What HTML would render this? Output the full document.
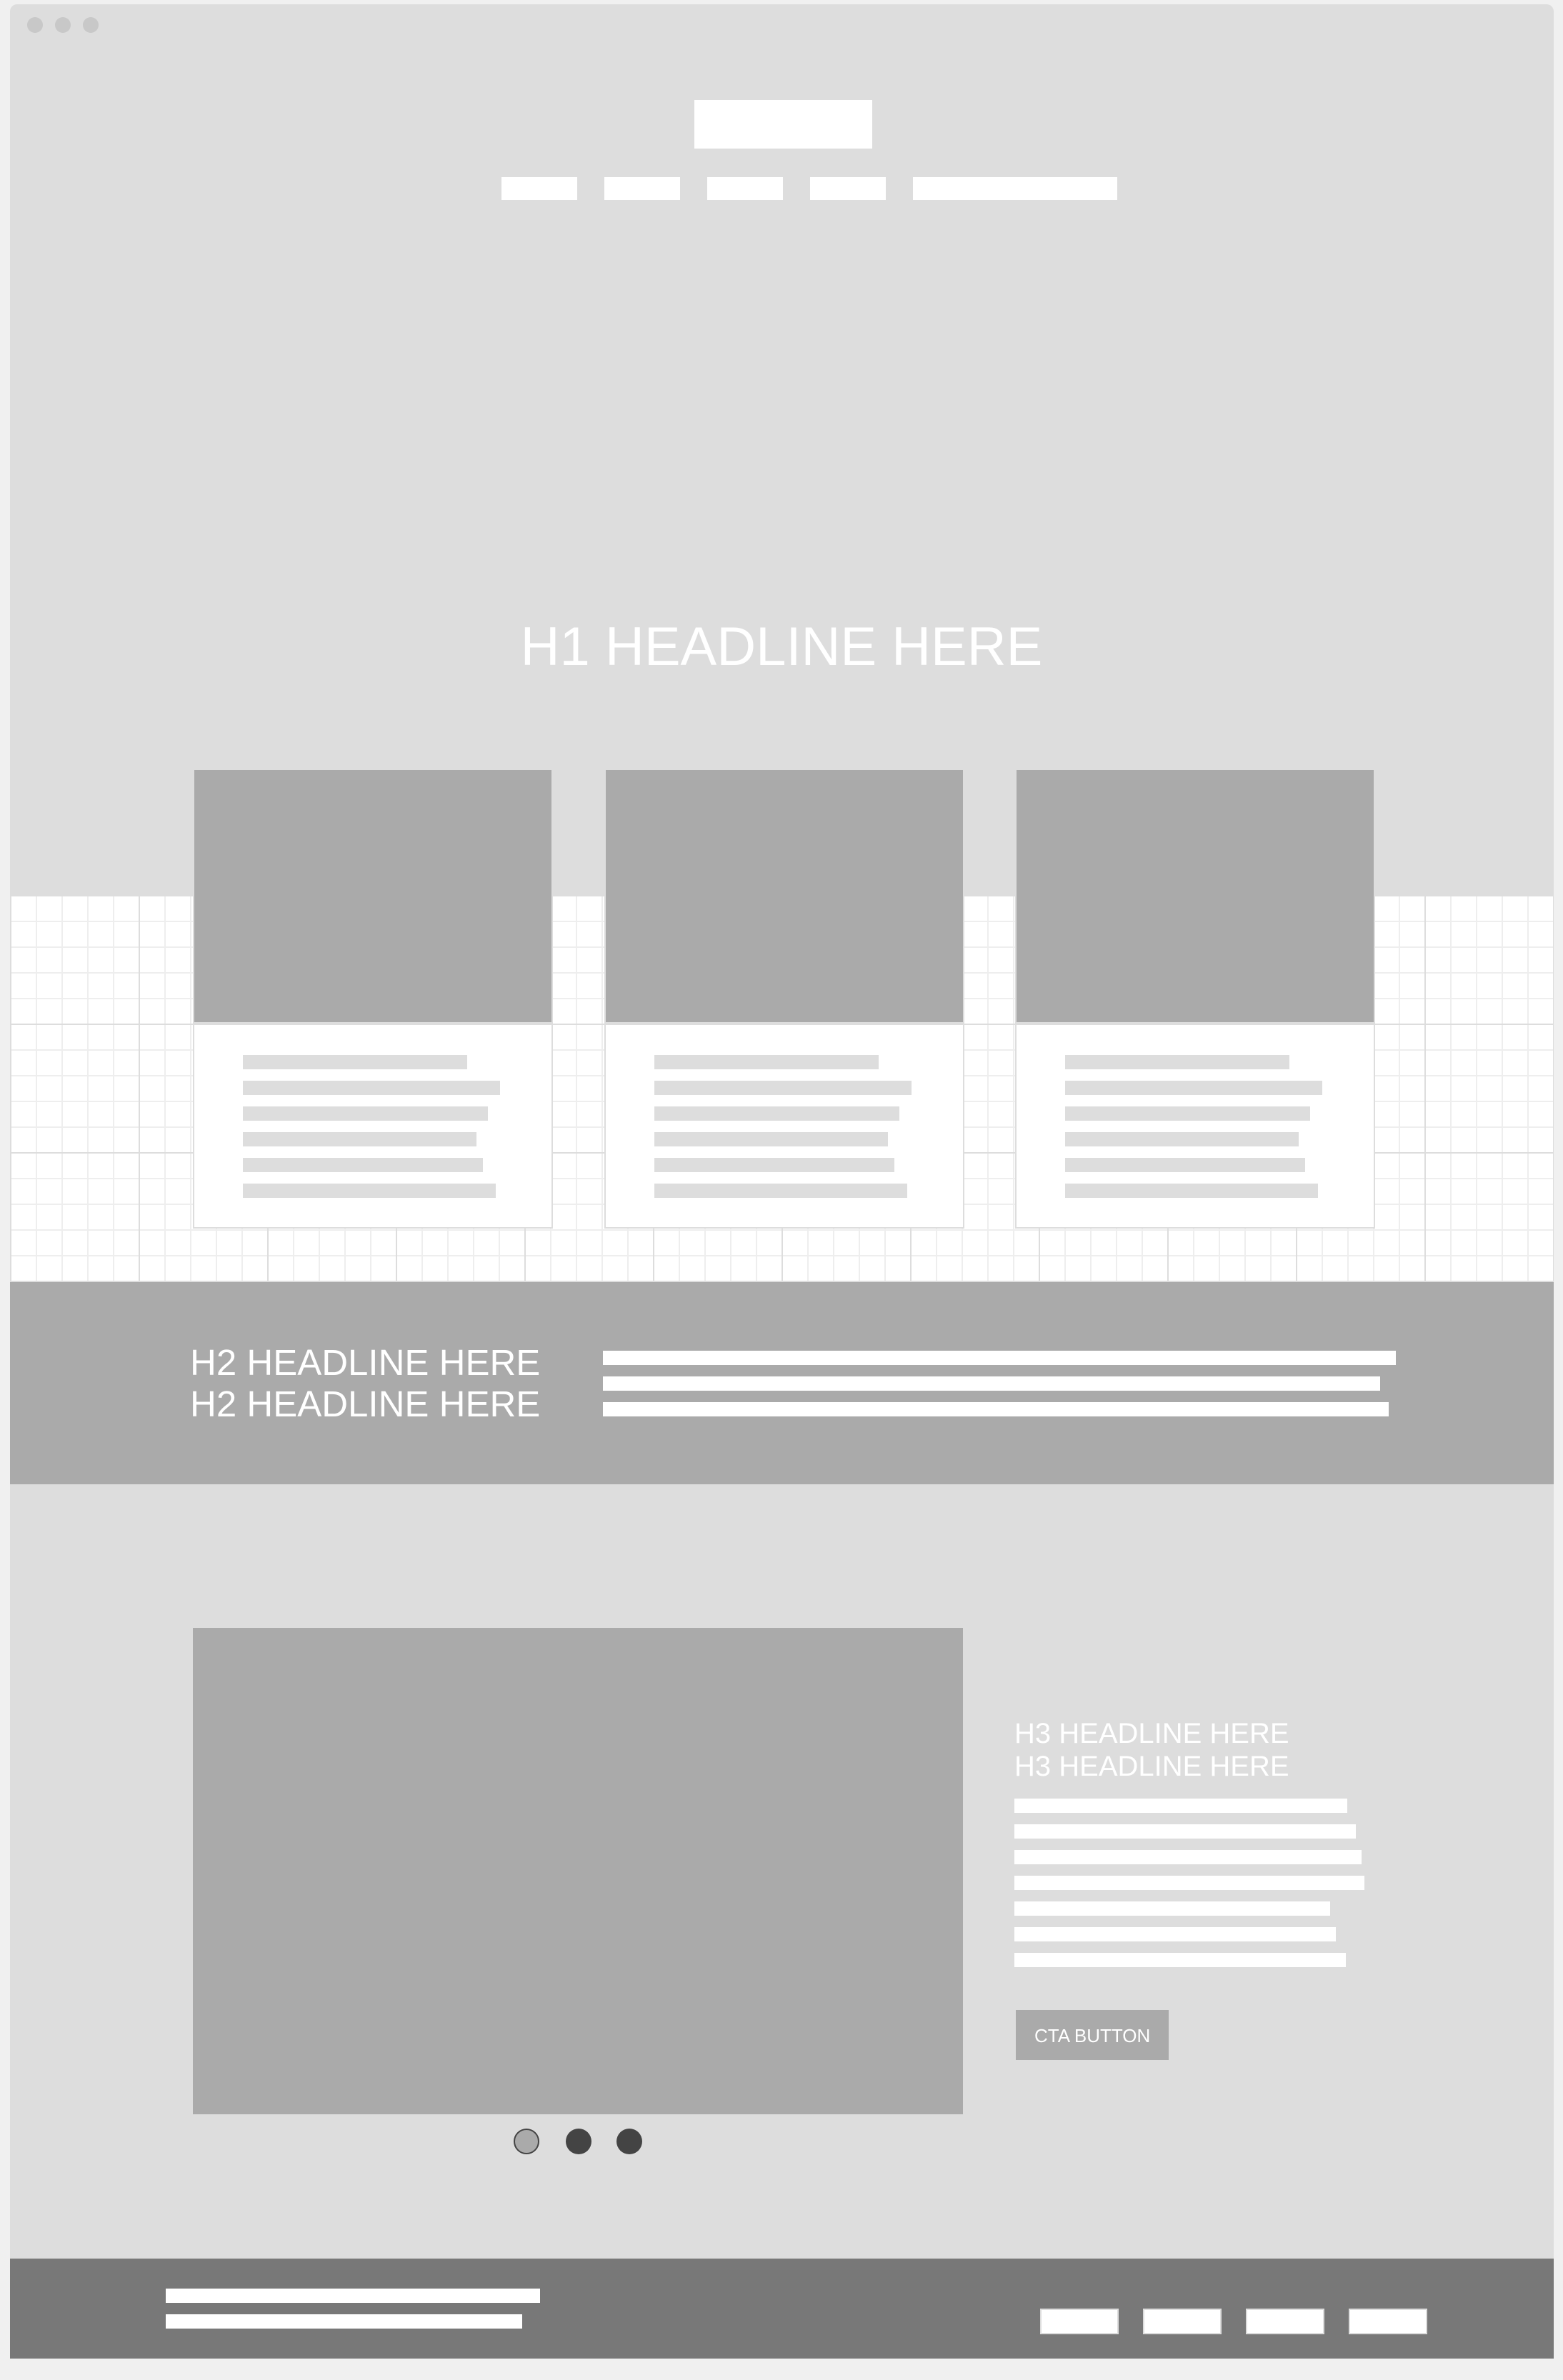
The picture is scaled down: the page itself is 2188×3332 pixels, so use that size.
<!DOCTYPE html>
<html><head><meta charset="utf-8"><style>
*{margin:0;padding:0;box-sizing:border-box}
html,body{width:2188px;height:3332px;background:#f0f0f0;overflow:hidden;font-family:"Liberation Sans",sans-serif}
.a{position:absolute}
.w{background:#fff}
.frame{left:14px;top:6px;width:2161px;height:3296px;background:#ddd;border-radius:10px 10px 0 0}
.dot{width:22px;height:22px;border-radius:50%;background:#c8c8c8;top:24px}
.grid{left:14px;top:1253px;width:2161px;height:541px;background-color:#fff;
background-image:
linear-gradient(to right,#ddd 2px,transparent 2px),
linear-gradient(to bottom,#ddd 2px,transparent 2px),
linear-gradient(to right,#eee 2px,transparent 2px),
linear-gradient(to bottom,#eee 2px,transparent 2px);
background-size:180px 180px,180px 180px,36px 36px,36px 36px;background-position:0 0}
.card{width:504px;height:644px;top:1076px;background:#fff;border:2px solid #ddd}
.card .img{position:absolute;left:0;top:0;right:0;height:357px;background:#aaa;border-bottom:4px solid #ddd}
.card i{position:absolute;left:68px;height:20px;background:#ddd}
.txt{color:#fff;white-space:nowrap;line-height:1}
</style></head><body>
<div class="a frame"></div>
<div class="a dot" style="left:38px"></div>
<div class="a dot" style="left:77px"></div>
<div class="a dot" style="left:116px"></div>

<div class="a w" style="left:972px;top:140px;width:249px;height:68px"></div>
<div class="a w" style="left:702px;top:248px;width:106px;height:32px"></div>
<div class="a w" style="left:846px;top:248px;width:106px;height:32px"></div>
<div class="a w" style="left:990px;top:248px;width:106px;height:32px"></div>
<div class="a w" style="left:1134px;top:248px;width:106px;height:32px"></div>
<div class="a w" style="left:1278px;top:248px;width:286px;height:32px"></div>

<div class="a txt" style="left:0;width:2188px;text-align:center;top:868px;font-size:76px">H1 HEADLINE HERE</div>

<div class="a grid"></div>

<div class="a card" style="left:270px"><div class="img"></div>
<i style="top:399px;width:314px"></i><i style="top:435px;width:360px"></i><i style="top:471px;width:343px"></i><i style="top:507px;width:327px"></i><i style="top:543px;width:336px"></i><i style="top:579px;width:354px"></i></div>
<div class="a card" style="left:846px"><div class="img"></div>
<i style="top:399px;width:314px"></i><i style="top:435px;width:360px"></i><i style="top:471px;width:343px"></i><i style="top:507px;width:327px"></i><i style="top:543px;width:336px"></i><i style="top:579px;width:354px"></i></div>
<div class="a card" style="left:1421px"><div class="img"></div>
<i style="top:399px;width:314px"></i><i style="top:435px;width:360px"></i><i style="top:471px;width:343px"></i><i style="top:507px;width:327px"></i><i style="top:543px;width:336px"></i><i style="top:579px;width:354px"></i></div>

<div class="a" style="left:14px;top:1795px;width:2161px;height:283px;background:#aaa"></div>
<div class="a txt" style="left:266px;top:1882px;font-size:51px">H2 HEADLINE HERE</div>
<div class="a txt" style="left:266px;top:1940px;font-size:51px">H2 HEADLINE HERE</div>
<div class="a w" style="left:844px;top:1891px;width:1110px;height:20px"></div>
<div class="a w" style="left:844px;top:1927px;width:1088px;height:20px"></div>
<div class="a w" style="left:844px;top:1963px;width:1100px;height:20px"></div>

<div class="a" style="left:270px;top:2279px;width:1078px;height:681px;background:#aaa"></div>
<div class="a" style="left:719px;top:2980px;width:36px;height:36px;border-radius:50%;background:#aaa;border:2px solid #444"></div>
<div class="a" style="left:792px;top:2980px;width:36px;height:36px;border-radius:50%;background:#444"></div>
<div class="a" style="left:863px;top:2980px;width:36px;height:36px;border-radius:50%;background:#444"></div>

<div class="a txt" style="left:1420px;top:2407px;font-size:40px">H3 HEADLINE HERE</div>
<div class="a txt" style="left:1420px;top:2453px;font-size:40px">H3 HEADLINE HERE</div>
<div class="a w" style="left:1420px;top:2518px;width:466px;height:20px"></div>
<div class="a w" style="left:1420px;top:2554px;width:478px;height:20px"></div>
<div class="a w" style="left:1420px;top:2590px;width:486px;height:20px"></div>
<div class="a w" style="left:1420px;top:2626px;width:490px;height:20px"></div>
<div class="a w" style="left:1420px;top:2662px;width:442px;height:20px"></div>
<div class="a w" style="left:1420px;top:2698px;width:450px;height:20px"></div>
<div class="a w" style="left:1420px;top:2734px;width:464px;height:20px"></div>
<div class="a" style="left:1422px;top:2814px;width:214px;height:70px;background:#aaa"></div>
<div class="a txt" style="left:1448px;top:2837px;font-size:26px">CTA BUTTON</div>

<div class="a" style="left:14px;top:3162px;width:2161px;height:140px;background:#787878"></div>
<div class="a w" style="left:232px;top:3204px;width:524px;height:20px"></div>
<div class="a w" style="left:232px;top:3240px;width:499px;height:20px"></div>
<div class="a w" style="left:1456px;top:3232px;width:110px;height:36px;border:2px solid #ddd"></div>
<div class="a w" style="left:1600px;top:3232px;width:110px;height:36px;border:2px solid #ddd"></div>
<div class="a w" style="left:1744px;top:3232px;width:110px;height:36px;border:2px solid #ddd"></div>
<div class="a w" style="left:1888px;top:3232px;width:110px;height:36px;border:2px solid #ddd"></div>
</body></html>
